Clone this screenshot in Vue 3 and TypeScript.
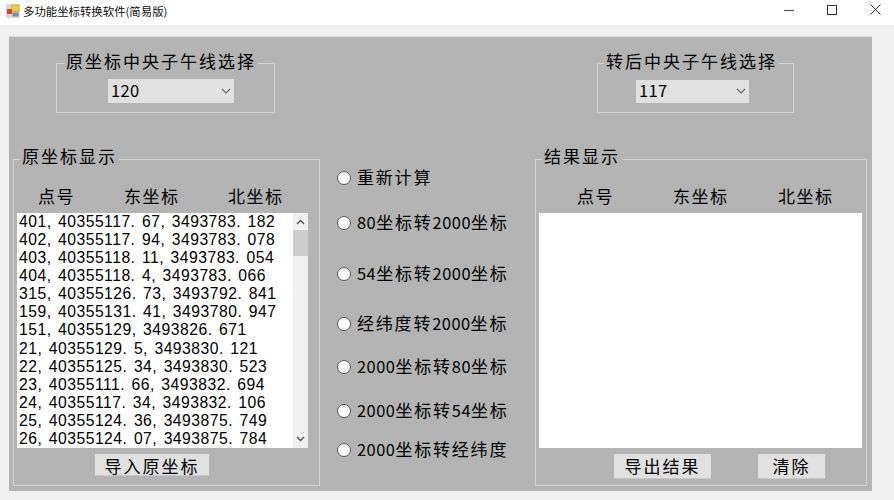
<script setup lang="ts">
const points: string[] = [
  '401, 40355117. 67, 3493783. 182',
  '402, 40355117. 94, 3493783. 078',
  '403, 40355118. 11, 3493783. 054',
  '404, 40355118. 4, 3493783. 066',
  '315, 40355126. 73, 3493792. 841',
  '159, 40355131. 41, 3493780. 947',
  '151, 40355129, 3493826. 671',
  '21, 40355129. 5, 3493830. 121',
  '22, 40355125. 34, 3493830. 523',
  '23, 40355111. 66, 3493832. 694',
  '24, 40355117. 34, 3493832. 106',
  '25, 40355124. 36, 3493875. 749',
  '26, 40355124. 07, 3493875. 784',
]
const options: string[] = [
  '重新计算',
  '80坐标转2000坐标',
  '54坐标转2000坐标',
  '经纬度转2000坐标',
  '2000坐标转80坐标',
  '2000坐标转54坐标',
  '2000坐标转经纬度',
]
const headers: string[] = ['点号', '东坐标', '北坐标']

// Digits and CJK have different pitches in the reference, so each run is styled on its own.
function runs(text: string): { text: string; num: boolean }[] {
  return (text.match(/\d+|\D+/g) ?? []).map((t) => ({ text: t, num: /^\d/.test(t) }))
}
</script>

<template>
  <div class="window">
    <header class="titlebar">
      <svg class="app-icon" width="14" height="14" viewBox="0 0 14 14">
        <rect x="0" y="0" width="14" height="14" fill="#d9d9d9" />
        <rect x="5.5" y="1" width="7.5" height="6.5" fill="#f4c93c" stroke="#c99a18" stroke-width="0.6" />
        <rect x="1" y="5" width="5" height="5" fill="#d4432c" />
        <rect x="6.5" y="8.5" width="6" height="4" fill="#5a8fdc" />
      </svg>
      <span class="title">多功能坐标转换软件(简易版)</span>
      <div class="controls">
        <svg width="10" height="10" viewBox="0 0 10 10"><path d="M0 5.5H10" stroke="#555" stroke-width="1.2" /></svg>
        <svg width="10" height="10" viewBox="0 0 10 10"><rect x="0.5" y="0.5" width="9" height="9" fill="none" stroke="#333" /></svg>
        <svg width="11" height="11" viewBox="0 0 11 11"><path d="M0.5 0.5L10.5 10.5M10.5 0.5L0.5 10.5" stroke="#333" /></svg>
      </div>
    </header>

    <main class="panel">
      <section class="top-row">
        <div class="group meridian source">
          <span class="legend">原坐标中央子午线选择</span>
          <div class="combo wide"><span>120</span>
            <svg width="10" height="6" viewBox="0 0 10 6"><path d="M1 1L5 5L9 1" fill="none" stroke="#666" stroke-width="1.1" /></svg>
          </div>
        </div>
        <div class="group meridian target">
          <span class="legend">转后中央子午线选择</span>
          <div class="combo narrow"><span>117</span>
            <svg width="10" height="6" viewBox="0 0 10 6"><path d="M1 1L5 5L9 1" fill="none" stroke="#666" stroke-width="1.1" /></svg>
          </div>
        </div>
      </section>

      <section class="bottom-row">
        <div class="group data source-data">
          <span class="legend short">原坐标显示</span>
          <div class="headers left-headers">
            <span v-for="h in headers" :key="h">{{ h }}</span>
          </div>
          <div class="listbox">
            <div class="rows">
              <div v-for="p in points" :key="p" class="row">{{ p }}</div>
            </div>
            <div class="scrollbar">
              <svg width="9" height="6" viewBox="0 0 9 6"><path d="M1 5L4.5 1.5L8 5" fill="none" stroke="#555" stroke-width="1.4" /></svg>
              <div class="thumb"></div>
              <svg class="down" width="9" height="6" viewBox="0 0 9 6"><path d="M1 1L4.5 4.5L8 1" fill="none" stroke="#555" stroke-width="1.4" /></svg>
            </div>
          </div>
          <div class="actions left-actions">
            <button class="btn import" type="button">导入原坐标</button>
          </div>
        </div>

        <div class="radios">
          <label v-for="o in options" :key="o" class="radio">
            <span class="dot"></span>
            <span class="radio-text"><span
              v-for="(r, i) in runs(o)"
              :key="i"
              :class="r.num ? 'num' : 'cjk'"
            >{{ r.text }}</span></span>
          </label>
        </div>

        <div class="group data result-data">
          <span class="legend short">结果显示</span>
          <div class="headers right-headers">
            <span v-for="h in headers" :key="h">{{ h }}</span>
          </div>
          <div class="result-box"></div>
          <div class="actions right-actions">
            <button class="btn export" type="button">导出结果</button>
            <button class="btn clear" type="button">清除</button>
          </div>
        </div>
      </section>
    </main>
  </div>
</template>

<style>
html, body { margin: 0; padding: 0; background: #f0f0f0; }
</style>

<style scoped>
.window {
  width: 894px;
  height: 500px;
  overflow: hidden;
  background: #f0f0f0;
  font-family: "Noto Sans CJK SC", "Noto Sans", sans-serif;
  color: #000;
}
.titlebar {
  height: 25px;
  background: #fff;
  display: flex;
  align-items: center;
  box-sizing: border-box;
  padding-left: 6px;
}
.app-icon { margin-top: -3px; flex: none; }
.title {
  margin-left: 3px;
  font-size: 11.4px;
  line-height: 20px;
  margin-top: -4px;
  color: #111;
}
.controls {
  margin-left: auto;
  display: flex;
  align-items: center;
  gap: 33px;
  padding-right: 13px;
  margin-top: -6px;
}
.panel {
  width: 863px;
  height: 455px;
  margin: 11px 0 0 9px;
  background: #b4b4b4;
  box-sizing: border-box;
  border-top: 1px solid #dcdcdc;
}
.top-row { display: flex; padding-top: 26px; height: 96px; box-sizing: border-box; }
.group {
  position: relative;
  box-sizing: border-box;
  border: 1px solid #d4d4d4;
}
.legend {
  position: absolute;
  top: -15px;
  left: 7px;
  padding: 0 2px;
  background: #b4b4b4;
  font-size: 17px;
  line-height: 24px;
  letter-spacing: 2px;
  white-space: nowrap;
}
.target .legend { left: 6px; }
.legend.short { top: -16px; left: 6px; }
.meridian { height: 50px; display: flex; }
.source { margin-left: 47px; width: 219px; padding-left: 51px; }
.target { margin-left: 322px; width: 197px; padding-left: 38px; }
.combo {
  height: 24px;
  margin-top: 15px;
  background: #e1e1e1;
  display: flex;
  align-items: center;
  justify-content: space-between;
  box-sizing: border-box;
  padding: 0 2px 2px 3px;
  font-size: 16.5px;
  letter-spacing: 0.3px;
}
.wide { width: 126px; }
.narrow { width: 113px; height: 23px; margin-top: 16px; padding-bottom: 3px; }
.combo svg { margin: 2px 1px 0 0; }
.bottom-row { display: flex; margin-top: 26px; }
.data { height: 327px; display: flex; flex-direction: column; }
.source-data { margin-left: 4px; width: 307px; padding: 0 11px 0 3px; }
.result-data { width: 332px; padding: 0 4px 0 3px; }
.headers {
  display: grid;
  height: 53px;
  box-sizing: border-box;
  padding-top: 24px;
  font-size: 17px;
  line-height: 24px;
  letter-spacing: 1.5px;
  white-space: nowrap;
}
.left-headers { padding-left: 21px; grid-template-columns: 86px 104px auto; }
.right-headers { padding-left: 38px; grid-template-columns: 96px 105px auto; }
.listbox {
  height: 235px;
  background: #fff;
  display: flex;
  overflow: hidden;
}
.rows {
  flex: 1;
  padding: 0 0 0 2px;
  font-family: "Liberation Sans", sans-serif;
  font-size: 15.7px;
  line-height: 18.08px;
  letter-spacing: 0.5px;
  word-spacing: 1.6px;
  white-space: nowrap;
  overflow: hidden;
}
.row { height: 18.08px; }
.scrollbar {
  width: 15px;
  flex: none;
  background: #f0f0f0;
  display: flex;
  flex-direction: column;
  align-items: center;
  padding-top: 6px;
  box-sizing: border-box;
}
.thumb {
  width: 15px;
  height: 26px;
  margin-top: 5px;
  background: #cdcdcd;
}
.down { margin-top: auto; margin-bottom: 6px; }
.actions { display: flex; flex: 1; align-items: flex-start; padding-top: 6px; }
.left-actions { padding-left: 78px; }
.right-actions { padding-left: 75px; gap: 47px; }
.btn {
  border: none;
  border-bottom: 1px solid #c9c9c9;
  background: #e1e1e1;
  color: #000;
  padding: 0;
  font-family: inherit;
  font-size: 17px;
  letter-spacing: 2px;
  line-height: 22px;
}
.import { width: 114px; height: 22px; padding-top: 1px; }
.export { width: 97px; height: 25px; padding-bottom: 1px; }
.clear { width: 67px; height: 25px; padding-bottom: 1px; }
.result-box { height: 235px; width: 323px; background: #fff; }
.radios {
  width: 198px;
  margin-left: 17px;
  display: grid;
  grid-template-rows: 45px 51px 50px 43px 44px 39px 38px;
  align-content: start;
}
.radio { display: flex; align-items: center; height: 38px; }
.dot {
  width: 12px;
  height: 12px;
  flex: none;
  border-radius: 50%;
  background: #fff;
  border: 1px solid #555;
}
.radio-text { margin: -3px 0 0 6px; white-space: nowrap; }
.cjk { font-size: 17px; letter-spacing: 1.8px; }
.num { font-size: 16.4px; letter-spacing: 0.5px; }
</style>
